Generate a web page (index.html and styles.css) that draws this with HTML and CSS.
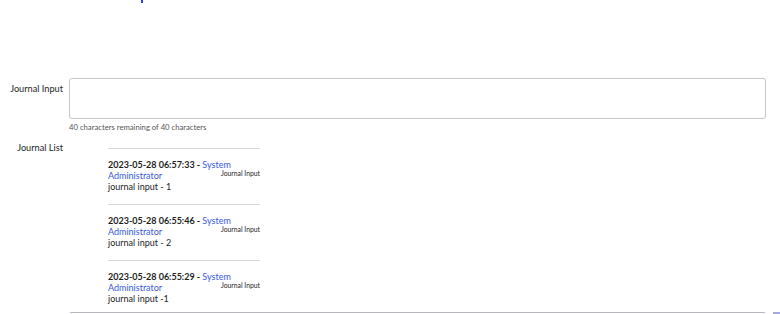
FILE: index.html
```html
<!DOCTYPE html>
<html lang="en">
<head>
    <meta charset="UTF-8">
    <meta name="viewport" content="width=device-width, initial-scale=1.0">
    <title>Journal</title>
    <link rel="stylesheet" href="styles.css">
</head>
<body>
    <div class="top-mark"></div>
    <div class="form-row input-row">
        <label class="row-label" for="journal-input">Journal Input</label>
        <div class="field">
            <textarea id="journal-input" class="journal-input" maxlength="40"></textarea>
            <div class="help">40 characters remaining of 40 characters</div>
        </div>
    </div>
    <div class="form-row list-row">
        <div class="row-label">Journal List</div>
        <div class="journal-list">
            <div class="entry">
                <span class="stamp">2023-05-28 06:57:33 - </span><a class="author" href="#">System Administrator</a><span class="source">Journal Input</span>
                <div class="note">journal input - 1</div>
            </div>
            <div class="entry">
                <span class="stamp">2023-05-28 06:55:46 - </span><a class="author" href="#">System Administrator</a><span class="source">Journal Input</span>
                <div class="note">journal input - 2</div>
            </div>
            <div class="entry">
                <span class="stamp">2023-05-28 06:55:29 - </span><a class="author" href="#">System Administrator</a><span class="source">Journal Input</span>
                <div class="note">journal input -1</div>
            </div>
        </div>
    </div>
    <div class="bottom-row">
        <div class="bottom-line"></div>
        <div class="bottom-tab"></div>
    </div>
</body>
</html>
```

FILE: styles.css
```css
body {
    font-family: 'Lato', 'Liberation Sans', sans-serif;
    background-color: #fff;
    margin: 0;
    padding: 0;
    color: #1e1e1e;
}
.top-mark {
    width: 2px;
    height: 3px;
    margin-left: 141px;
    background: #2a3cf0;
}
.form-row {
    display: grid;
    grid-template-columns: 63px 1fr;
    column-gap: 6px;
    padding-right: 14px;
}
.input-row {
    margin-top: 75px;
}
.row-label {
    font-size: 9.2px;
    text-align: right;
    padding-top: 5px;
}
.journal-input {
    display: block;
    width: 100%;
    height: 41px;
    box-sizing: border-box;
    border: 1px solid #c5c5cc;
    border-radius: 3px;
    resize: none;
    font-family: inherit;
    margin: 0;
}
.help {
    font-size: 7.7px;
    color: #555;
    margin-top: 3px;
}
.list-row {
    margin-top: 5px;
}
.journal-list {
    margin-left: 39px;
    width: 152px;
    margin-top: 11px;
}
.entry {
    border-top: 1px solid #d8d8d8;
    padding: 10px 0 12px;
    font-size: 9px;
    line-height: 11px;
}
.entry:last-child {
    padding-bottom: 8px;
}
.stamp {
    font-weight: bold;
}
.author {
    color: #3558e6;
    text-decoration: none;
}
.source {
    float: right;
    font-size: 6.8px;
    line-height: 9px;
    margin-top: -1px;
}
.bottom-row {
    display: flex;
    align-items: flex-start;
}
.bottom-line {
    margin-left: 70px;
    width: 695px;
    height: 1px;
    background: #b9b9c8;
}
.bottom-tab {
    margin-left: 8px;
    width: 7px;
    height: 2px;
    background: #a8a8e0;
}
```
